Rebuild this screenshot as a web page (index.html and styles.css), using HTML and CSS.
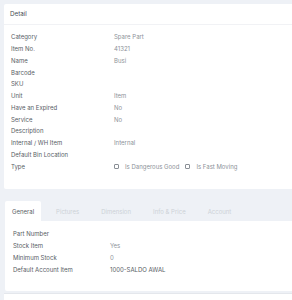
FILE: index.html
```html
<!DOCTYPE html>
<html lang="en">
<head>
  <meta charset="UTF-8" />
  <title>Item Detail</title>
  <link rel="stylesheet" href="styles.css">
</head>
<body>
  <div class="page">
    <div class="card">
      <div class="card-head">Detail</div>
      <div class="card-body">
        <div class="row"><span class="lbl">Category</span><span class="val">Spare Part</span></div>
        <div class="row"><span class="lbl">Item No.</span><span class="val">41321</span></div>
        <div class="row"><span class="lbl">Name</span><span class="val">Busi</span></div>
        <div class="row"><span class="lbl">Barcode</span><span class="val"></span></div>
        <div class="row"><span class="lbl">SKU</span><span class="val"></span></div>
        <div class="row"><span class="lbl">Unit</span><span class="val">Item</span></div>
        <div class="row"><span class="lbl">Have an Expired</span><span class="val">No</span></div>
        <div class="row"><span class="lbl">Service</span><span class="val">No</span></div>
        <div class="row"><span class="lbl">Description</span><span class="val"></span></div>
        <div class="row"><span class="lbl">Internal / WH Item</span><span class="val">Internal</span></div>
        <div class="row"><span class="lbl">Default Bin Location</span><span class="val"></span></div>
        <div class="row">
          <span class="lbl">Type</span>
          <span class="val checks">
            <span class="box"></span><span class="check-lbl">Is Dangerous Good</span>
            <span class="box"></span><span class="check-lbl">Is Fast Moving</span>
          </span>
        </div>
      </div>
    </div>

    <div class="card tabs-card">
      <div class="tabs">
        <span class="tab active">General</span>
        <span class="tab">Pictures</span>
        <span class="tab">Dimension</span>
        <span class="tab">Info &amp; Price</span>
        <span class="tab">Account</span>
      </div>
      <div class="tab-body">
        <div class="row"><span class="lbl">Part Number</span><span class="val"></span></div>
        <div class="row"><span class="lbl">Stock Item</span><span class="val">Yes</span></div>
        <div class="row"><span class="lbl">Minimum Stock</span><span class="val">0</span></div>
        <div class="row"><span class="lbl">Default Account Item</span><span class="val dark">1000-SALDO AWAL</span></div>
      </div>
    </div>
    <div class="next-card"></div>
  </div>
</body>
</html>
```

FILE: styles.css
```css
* { box-sizing: border-box; margin: 0; padding: 0; }
body {
  background: #eef1f6;
  font-family: Inter, 'Noto Sans', Arial, sans-serif;
  font-size: 6px;
  color: #5c6168;
  width: 292px;
  overflow: hidden;
}
.page {
  padding: 4px 0 0 4px;
  display: flex;
  flex-direction: column;
  gap: 12px;
}
.card {
  background: #fff;
  border-radius: 2px 0 0 2px;
}
.card-head {
  height: 21px;
  padding: 0 6px;
  display: flex;
  align-items: center;
  font-size: 6.3px;
  color: #4a4f57;
  border-bottom: 1px solid #f1f2f5;
}
.card-body {
  padding: 6px 7px 17px;
}
.row {
  display: flex;
  align-items: center;
  height: 11.75px;
}
.lbl {
  width: 103px;
  flex: none;
  color: #585d65;
}
.val {
  color: #8d9299;
}
.val.dark { color: #585d65; }
.checks {
  display: flex;
  align-items: center;
}
.box {
  width: 5px;
  height: 5px;
  border: 0.8px solid #8a8f96;
  border-radius: 1px;
  margin-right: 6px;
}
.check-lbl {
  margin-right: 6px;
}
.tabs-card {
  margin-left: 1px;
}
.tabs {
  display: flex;
  background: #eef1f6;
  height: 20px;
  align-items: stretch;
}
.tab {
  display: flex;
  align-items: center;
  padding: 0 7px;
  margin-right: 8px;
  color: #cdd1d7;
}
.tab.active {
  background: #fff;
  color: #585d65;
  border-radius: 2px 2px 0 0;
}
.tab-body {
  padding: 7px 8px 16px;
}
.tab-body .lbl { width: 97px; }
.next-card {
  margin-top: -10px;
  border-top: 1px solid #e4e7ec;
  background: #fff;
  height: 20px;
}
```
